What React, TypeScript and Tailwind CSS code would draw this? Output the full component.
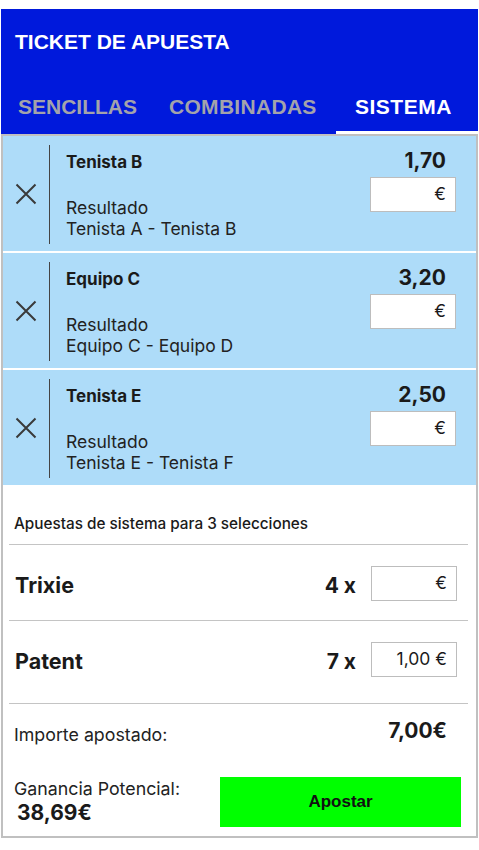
import React from "react";

const body = { fontFamily: "Inter, 'Noto Sans', sans-serif" };
const arial = { fontFamily: "'Liberation Sans', Arial, sans-serif" };

function CloseX() {
  return (
    <svg width="22" height="22" viewBox="0 0 22 22" aria-hidden="true">
      <path d="M1.5 1.5L20.5 20.5M20.5 1.5L1.5 20.5" stroke="#3a3a3a" strokeWidth="2" fill="none" />
    </svg>
  );
}

type Pick = { name: string; odds: string; market: string; event: string };

const picks: Pick[] = [
  { name: "Tenista B", odds: "1,70", market: "Resultado", event: "Tenista A - Tenista B" },
  { name: "Equipo C", odds: "3,20", market: "Resultado", event: "Equipo C - Equipo D" },
  { name: "Tenista E", odds: "2,50", market: "Resultado", event: "Tenista E - Tenista F" },
];

function StakeBox({ value }: { value?: string }) {
  return (
    <div className="w-[86px] h-[35px] bg-white border border-[#bdbdbd] flex items-center justify-end pr-[9px] text-[17.5px] text-[#1a1a1a]">
      {value ? `${value} €` : "€"}
    </div>
  );
}

function PickRow({ p }: { p: Pick }) {
  return (
    <div className="flex h-[115px] bg-[#aedcf9]">
      <div className="w-[46px] flex items-center justify-center shrink-0">
        <CloseX />
      </div>
      <div className="w-px bg-[#444] mt-[9px] mb-[7px] shrink-0" />
      <div className="flex-1 flex justify-between pl-[16px] pr-[20px]">
        <div className="flex flex-col pt-[16px]">
          <div className="text-[17px] leading-5 font-bold text-[#1a1a1a]">{p.name}</div>
          <div className="mt-[25px] text-[17.5px] leading-[21px] text-[#222]">
            <div>{p.market}</div>
            <div>{p.event}</div>
          </div>
        </div>
        <div className="flex flex-col items-end pt-[13px]">
          <div className="text-[21px] leading-6 font-bold text-[#1a1a1a] pr-[10px]">{p.odds}</div>
          <div className="mt-[4px]">
            <StakeBox />
          </div>
        </div>
      </div>
    </div>
  );
}

function SystemRow({ label, count, value, pb }: { label: string; count: string; value?: string; pb: string }) {
  return (
    <div className={`flex items-center justify-between pl-[12px] pr-[19px] pt-[21px] ${pb}`}>
      <div className="pt-[4px] leading-none text-[21.5px] font-bold text-[#1a1a1a]">{label}</div>
      <div className="flex items-center gap-[15px]">
        <div className="pt-[3px] leading-none text-[21px] font-bold text-[#1a1a1a]">{count} x</div>
        <StakeBox value={value} />
      </div>
    </div>
  );
}

export default function App() {
  return (
    <div className="bg-white min-h-[850px] pt-[9px]" style={body}>
      <div className="ml-[1px] w-[477px]">
        <div className="bg-[#0019dc] flex flex-col" style={arial}>
          <div className="pt-[21px] px-[14px] text-[21px] leading-6 font-bold text-white">TICKET DE APUESTA</div>
          <div className="mt-[41px] grid grid-cols-[157px_178px_142px] text-[21px] leading-6 font-bold">
            <div className="pl-[17px] pb-[12px] border-b-[3px] border-transparent text-[#a3a3ab]">SENCILLAS</div>
            <div className="pl-[11px] pb-[12px] border-b-[3px] border-transparent text-[#a3a3ab] tracking-[0.3px]">COMBINADAS</div>
            <div className="pl-[19px] pb-[12px] border-b-[3px] border-white text-white tracking-[0.5px]">SISTEMA</div>
          </div>
        </div>

        <div className="border-2 border-[#c0c0c0]">
          <div className="flex flex-col gap-[2px] bg-white">
            {picks.map((p) => (
              <PickRow key={p.name} p={p} />
            ))}
          </div>

          <div className="bg-white">
            <div className="pt-[29px] px-[11px] text-[15.3px] leading-5 font-medium text-[#1a1a1a]">
              Apuestas de sistema para 3 selecciones
            </div>
            <div className="mt-[10px] h-px bg-[#c4c4c4] ml-[6px] mr-[8px]" />
            <SystemRow label="Trixie" count="4" pb="pb-[19px]" />
            <div className="h-px bg-[#c4c4c4] ml-[6px] mr-[8px]" />
            <SystemRow label="Patent" count="7" value="1,00" pb="pb-[26px]" />
            <div className="h-px bg-[#c4c4c4] ml-[6px] mr-[8px]" />

            <div className="flex justify-between items-start pt-[15px] pl-[11px] pr-[29px]">
              <div className="mt-[4px] text-[17.8px] leading-6 text-[#222]">Importe apostado:</div>
              <div className="text-[21px] leading-6 font-bold text-[#1a1a1a]">7,00€</div>
            </div>

            <div className="mt-[30px] flex justify-between items-start pl-[11px] pr-[15px] pb-[9px]">
              <div className="flex flex-col">
                <div className="text-[17.8px] leading-6 text-[#222]">Ganancia Potencial:</div>
                <div className="ml-[3px] text-[21px] leading-6 font-bold text-[#1a1a1a]">38,69€</div>
              </div>
              <button
                className="w-[241px] h-[50px] bg-[#00ff00] text-[17px] font-bold text-[#111] flex items-center justify-center"
                style={arial}
              >
                Apostar
              </button>
            </div>
          </div>
        </div>
      </div>
    </div>
  );
}
